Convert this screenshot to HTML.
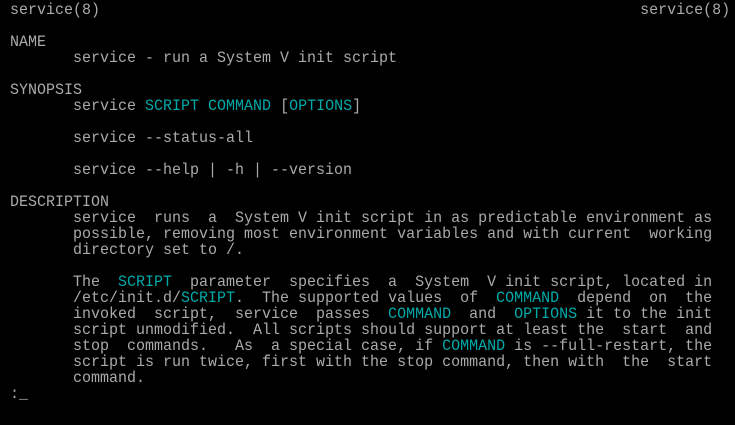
<!DOCTYPE html>
<html><head><meta charset="utf-8"><style>
html,body{margin:0;padding:0;background:#000;width:735px;height:425px;overflow:hidden}
pre{margin:0;position:absolute;left:10px;top:1px;font-family:"Liberation Mono","DejaVu Sans Mono",monospace;font-size:16px;line-height:16px;color:#aaaaaa;white-space:pre;transform:scale(0.9375,1);transform-origin:0 0}
.c{color:#00aaaa}
</style></head><body><pre style="top:2px">service(8)                                                            service(8)

NAME
       service - run a System V init script

SYNOPSIS
       service <span class="c">SCRIPT</span> <span class="c">COMMAND</span> [<span class="c">OPTIONS</span>]

       service --status-all

       service --help | -h | --version

DESCRIPTION
       service  runs  a  System V init script in as predictable environment as
       possible, removing most environment variables and with current  working
       directory set to /.

       The  <span class="c">SCRIPT</span>  parameter  specifies  a  System  V init script, located in
       /etc/init.d/<span class="c">SCRIPT</span>.  The supported values  of  <span class="c">COMMAND</span>  depend  on  the
       invoked  script,  service  passes  <span class="c">COMMAND</span>  and  <span class="c">OPTIONS</span> it to the init
       script unmodified.  All scripts should support at least the  start  and
       stop  commands.   As  a special case, if <span class="c">COMMAND</span> is --full-restart, the
       script is run twice, first with the stop command, then with  the  start
       command.
:_</pre></body></html>
